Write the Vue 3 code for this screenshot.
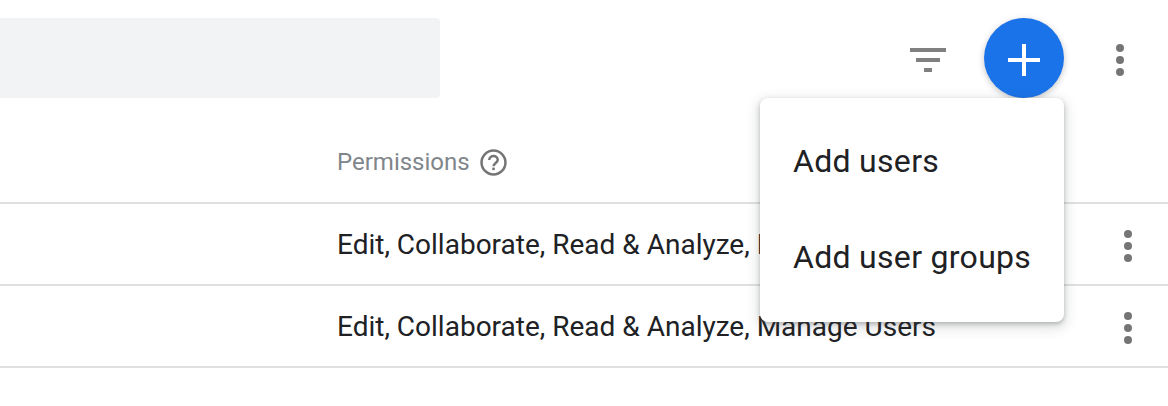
<script setup>
const rows = [
  { id: 1, permissions: 'Edit, Collaborate, Read & Analyze, Manage Users' },
  { id: 2, permissions: 'Edit, Collaborate, Read & Analyze, Manage Users' }
]
</script>

<template>
  <div class="page">
    <div class="toolbar">
      <div class="search"></div>
      <div class="actions">
        <button class="icon-btn filter" aria-label="Filter">
          <svg width="36" height="24" viewBox="0 0 36 24"><path fill="#808080" d="M0 0h36v4H0zM6 10h24v4H6zM14 20h8v4h-8z"/></svg>
        </button>
        <button class="fab" aria-label="Add">
          <svg width="32" height="32" viewBox="0 0 32 32"><path fill="#fff" d="M14 0h4v14h14v4H18v14h-4V18H0v-4h14z"/></svg>
        </button>
        <button class="icon-btn more" aria-label="More">
          <span class="dots"><i></i><i></i><i></i></span>
        </button>
      </div>
    </div>

    <div class="table">
      <div class="row head">
        <span class="perm-head">Permissions</span>
        <svg class="help" width="27" height="27" viewBox="0 0 28 28">
          <circle cx="14" cy="14" r="12.400" fill="none" stroke="#757575" stroke-width="2.600"/>
          <path fill="none" stroke="#757575" stroke-width="2.600" d="M9.600 11.400c0-2.500 2-4.100 4.400-4.100s4.400 1.600 4.400 3.900c0 3.200-4.400 3.300-4.400 6.800"/>
          <rect x="12.700" y="19.300" width="2.600" height="2.600" fill="#757575"/>
        </svg>
      </div>
      <div v-for="r in rows" :key="r.id" class="row">
        <span class="perm">{{ r.permissions }}</span>
        <span class="dots row-dots"><i></i><i></i><i></i></span>
      </div>
    </div>

    <div class="menu">
      <div class="menu-item">Add users</div>
      <div class="menu-item">Add user groups</div>
    </div>
  </div>
</template>

<style scoped>
.page{position:relative;width:1168px;height:406px;overflow:hidden;background:#fff;font-family:Roboto,"Liberation Sans",sans-serif;color:#202124;}
.toolbar{display:flex;align-items:center;justify-content:space-between;height:80px;padding:18px 0;}
.search{width:440px;height:80px;background:#f1f3f4;border-radius:0 4px 4px 0;}
.actions{display:flex;align-items:center;}
.icon-btn{border:0;background:none;padding:0;margin-top:4px;display:flex;align-items:center;justify-content:center;}
.filter{margin-right:38px;}
.fab{width:80px;height:80px;border:0;border-radius:50%;background:#1a73e8;display:flex;align-items:center;justify-content:center;padding:4px 0 0;box-shadow:0 2px 6px rgba(60,64,67,.3);margin-right:52px;}
.more{margin-right:44px;}
.dots{display:flex;flex-direction:column;gap:4px;}
.dots i{display:block;width:8px;height:8px;border-radius:50%;background:#757575;}
.table{display:flex;flex-direction:column;}
.row{position:relative;display:flex;align-items:center;height:80px;padding-left:337px;border-bottom:2px solid #e0e0e0;}
.row.head{height:80px;padding-top:6px;gap:10px;}
.perm-head{font-size:24px;color:#80868b;}
.help{display:block;}
.perm{font-size:28px;color:#202124;}
.row-dots{position:absolute;left:1124px;top:26px;}
.menu{position:absolute;left:760px;top:98px;width:304px;height:224px;box-sizing:border-box;padding:15px 0 17px;background:#fff;border-radius:8px;box-shadow:0 4px 12px 3px rgba(60,64,67,.15),0 2px 4px rgba(60,64,67,.3);}
.menu-item{height:96px;display:flex;align-items:center;padding-left:33px;font-size:32px;letter-spacing:.3px;color:#202124;}
</style>
